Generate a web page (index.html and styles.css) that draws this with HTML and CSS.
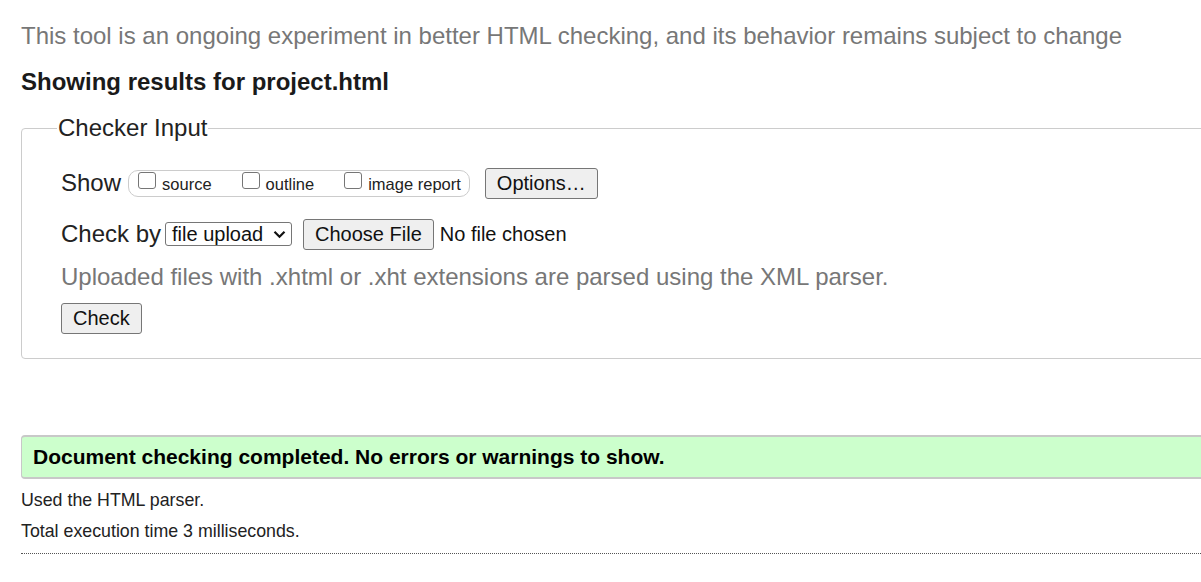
FILE: index.html
```html
<!DOCTYPE html>
<html lang="en">
<head>
<meta charset="utf-8">
<title>Nu Html Checker</title>
<link rel="stylesheet" href="styles.css">
</head>
<body>
<div class="page">
  <p class="intro">This tool is an ongoing experiment in better HTML checking, and its behavior remains subject to change</p>
  <h2 class="title">Showing results for project.html</h2>
  <fieldset class="checker">
    <legend class="legend">Checker Input</legend>
    <div class="row row-show">
      <span class="label">Show</span>
      <div class="pill">
        <label class="opt"><span class="box"></span><span class="opt-text">source</span></label>
        <label class="opt"><span class="box"></span><span class="opt-text">outline</span></label>
        <label class="opt"><span class="box"></span><span class="opt-text">image report</span></label>
      </div>
      <button class="btn btn-options" type="button">Options…</button>
    </div>
    <div class="row row-check">
      <span class="label">Check by</span>
      <span class="select">file upload<svg class="chev" width="13" height="9" viewBox="0 0 13 9"><path d="M1.5 1.8 L6.5 6.8 L11.5 1.8" fill="none" stroke="#111" stroke-width="2.2"/></svg></span>
      <button class="btn btn-file" type="button">Choose File</button>
      <span class="nofile">No file chosen</span>
    </div>
    <p class="note">Uploaded files with .xhtml or .xht extensions are parsed using the XML parser.</p>
    <button class="btn btn-check" type="button">Check</button>
  </fieldset>
  <div class="success">Document checking completed. No errors or warnings to show.</div>
  <p class="meta meta-first">Used the HTML parser.</p>
  <p class="meta">Total execution time 3 milliseconds.</p>
  <hr class="rule">
</div>
</body>
</html>
```
FILE: styles.css
```css
html, body {
  margin: 0;
  padding: 0;
  overflow: hidden;
  background: #fff;
}
body {
  font-family: "Liberation Sans", Arial, sans-serif;
  color: #222;
}
.page {
  width: 1400px;
  padding-left: 21px;
}
.intro {
  margin: 0;
  padding-top: 22px;
  font-size: 24px;
  line-height: 28px;
  color: #777;
}
.title {
  margin: 18px 0 0;
  font-size: 24px;
  line-height: 28px;
  font-weight: bold;
  color: #1a1a1a;
}
.checker {
  margin: 18px 0 0;
  padding: 25px 0 24px 39px;
  border: 1px solid #ccc;
  border-radius: 4px;
}
.legend {
  margin-left: -4px;
  padding: 0 1px;
  font-size: 24px;
  line-height: 28px;
  color: #222;
}
.row {
  display: flex;
  align-items: center;
  height: 32px;
}
.row-check {
  margin-top: 19px;
}
.label {
  font-size: 24px;
  color: #222;
}
.pill {
  display: flex;
  align-items: center;
  margin-left: 7px;
  height: 25px;
  padding: 0 8px 0 9px;
  border: 1px solid #ccc;
  border-radius: 10px;
}
.opt {
  display: flex;
  align-items: center;
  margin-right: 30px;
}
.opt:last-child {
  margin-right: 0;
}
.box {
  width: 16px;
  height: 15px;
  border: 1px solid #767676;
  border-radius: 3px;
  margin-bottom: 5px;
  background: #fff;
}
.opt-text {
  margin-left: 6px;
  padding-top: 3px;
  font-size: 16.5px;
  color: #222;
}
.btn {
  height: 31px;
  padding: 0 11px;
  border: 1px solid #767676;
  border-radius: 3px;
  background: #efefef;
  font-family: "Liberation Sans", Arial, sans-serif;
  font-size: 20px;
  color: #111;
}
.btn-options {
  margin-left: 15px;
}
.select {
  display: flex;
  align-items: center;
  box-sizing: border-box;
  width: 127px;
  height: 24px;
  margin-left: 4px;
  padding: 0 5px 0 6px;
  border: 1px solid #767676;
  border-radius: 3px;
  font-size: 20px;
  color: #111;
  justify-content: space-between;
}
.chev {
  margin-top: 1px;
}
.btn-file {
  margin-left: 11px;
}
.nofile {
  margin-left: 6px;
  font-size: 20px;
  color: #111;
}
.note {
  margin: 13px 0 0;
  font-size: 24px;
  line-height: 28px;
  color: #777;
}
.btn-check {
  display: block;
  margin-top: 12px;
}
.success {
  box-sizing: border-box;
  margin-top: 76px;
  height: 44px;
  padding-left: 11px;
  display: flex;
  align-items: center;
  background: #ccffcc;
  border: 1px solid #c8c8c8;
  border-width: 2px 1px;
  border-radius: 4px;
  font-size: 21px;
  font-weight: bold;
  color: #000;
}
.meta {
  margin: 11px 0 0;
  font-size: 17.8px;
  line-height: 20px;
  color: #222;
}
.meta-first {
  margin-top: 11px;
}
.rule {
  margin: 12px 0 0;
  border: 0;
  border-top: 1px dotted #555;
  height: 0;
}
```
